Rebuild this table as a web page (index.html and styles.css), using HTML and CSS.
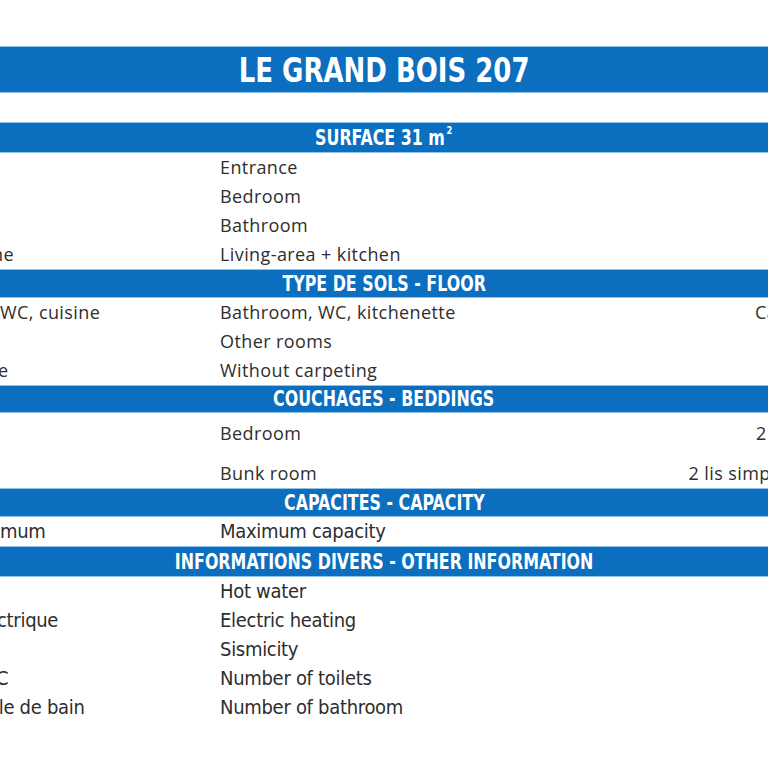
FILE: index.html
```html
<!DOCTYPE html>
<html lang="fr">
<head>
<meta charset="utf-8">
<title>Le Grand Bois 207</title>
<link rel="stylesheet" href="styles.css">
</head>
<body>
<div class="sheet">
  <div class="title"><span>LE GRAND BOIS 207</span></div>
  <div class="gap"></div>

  <div class="band band-31"><span>SURFACE 31 m<sup>2</sup></span></div>
  <div class="row wide"><div class="a"></div><div class="b">Entrance</div><div class="c"></div></div>
  <div class="row wide"><div class="a"></div><div class="b">Bedroom</div><div class="c"></div></div>
  <div class="row wide"><div class="a"></div><div class="b">Bathroom</div><div class="c"></div></div>
  <div class="row wide"><div class="a"><span class="cut-8">ne</span></div><div class="b">Living-area + kitchen</div><div class="c"></div></div>

  <div class="band"><span>TYPE DE SOLS - FLOOR</span></div>
  <div class="row wide"><div class="a"><span>WC, cuisine</span></div><div class="b">Bathroom, WC, kitchenette</div><div class="c"><span class="nudge-5">Carreaux</span></div></div>
  <div class="row wide"><div class="a"></div><div class="b">Other rooms</div><div class="c"></div></div>
  <div class="row wide"><div class="a"><span class="cut-2">e</span></div><div class="b">Without carpeting</div><div class="c"></div></div>

  <div class="band band-28"><span>COUCHAGES - BEDDINGS</span></div>
  <div class="row wide tall-35"><div class="a"></div><div class="b">Bedroom</div><div class="c">2 lits 90</div></div>
  <div class="row wide tall-40"><div class="a"></div><div class="b">Bunk room</div><div class="c"><span class="nudge-5">2 lis simples superposés</span></div></div>

  <div class="band"><span>CAPACITES - CAPACITY</span></div>
  <div class="row narrow"><div class="a"><span>mum</span></div><div class="b">Maximum capacity</div><div class="c"></div></div>

  <div class="band band-31"><span>INFORMATIONS DIVERS - OTHER INFORMATION</span></div>
  <div class="row narrow"><div class="a"></div><div class="b">Hot water</div><div class="c"></div></div>
  <div class="row narrow"><div class="a"><span class="cut-3">ctrique</span></div><div class="b">Electric heating</div><div class="c"></div></div>
  <div class="row narrow"><div class="a"></div><div class="b">Sismicity</div><div class="c"></div></div>
  <div class="row narrow"><div class="a"><span class="cut-4">C</span></div><div class="b">Number of toilets</div><div class="c"></div></div>
  <div class="row narrow"><div class="a"><span class="cut-6">lle de bain</span></div><div class="b">Number of bathroom</div><div class="c"></div></div>
</div>
</body>
</html>
```

FILE: styles.css
```css
html, body {
  margin: 0;
  padding: 0;
  background: #ffffff;
  overflow: hidden;
}

.sheet {
  width: 768px;
  height: 768px;
  overflow: hidden;
  padding-top: 46px;
  box-sizing: border-box;
  color: #2e2e2e;
}

.title {
  height: 47px;
  box-sizing: border-box;
  background: #0b6ebe;
  border-top: 1px solid #8fc3ea;
  border-bottom: 1px solid #8fc3ea;
  color: #ffffff;
  font-family: "DejaVu Sans Condensed", "DejaVu Sans", sans-serif;
  font-weight: bold;
  font-size: 34px;
  display: flex;
  align-items: center;
  justify-content: center;
  padding-top: 1px;
  white-space: nowrap;
}

.title span {
  display: inline-block;
  transform: scaleX(0.85);
}

.gap {
  height: 29px;
}

.band {
  height: 29px;
  box-sizing: border-box;
  background: #0b6ebe;
  border-top: 1px solid #8fc3ea;
  border-bottom: 1px solid #8fc3ea;
  color: #ffffff;
  font-family: "DejaVu Sans Condensed", "DejaVu Sans", sans-serif;
  font-weight: bold;
  font-size: 21px;
  display: flex;
  align-items: center;
  justify-content: center;
  white-space: nowrap;
}

.band span {
  display: inline-block;
  transform: scaleX(0.84);
}

.band-31 { height: 31px; }
.band-28 { height: 28px; }

.band sup {
  font-size: 11px;
  margin-left: 2px;
  position: relative;
  top: -3px;
}

.row {
  display: grid;
  grid-template-columns: 220px 460px 220px;
  width: 900px;
  height: 29px;
  white-space: nowrap;
}

.row > div {
  display: flex;
  align-items: flex-end;
  padding-bottom: 3px;
  overflow: hidden;
}

.row .c {
  justify-content: center;
}

.cut-2 { margin-left: -2px; }
.cut-3 { margin-left: -3px; }
.cut-4 { margin-left: -4px; }
.cut-6 { margin-left: -6px; }
.cut-8 { margin-left: -8px; }
.nudge-5 { margin-left: 10px; }

.wide {
  font-family: "Open Sans", "Noto Sans", sans-serif;
  font-size: 18px;
  line-height: 24px;
  letter-spacing: 0.4px;
}

.narrow {
  font-family: "DejaVu Sans Condensed", "DejaVu Sans", sans-serif;
  font-size: 20px;
  line-height: 24px;
  letter-spacing: -0.3px;
}

.tall-35 { height: 35px; }
.tall-40 { height: 40px; }
```
